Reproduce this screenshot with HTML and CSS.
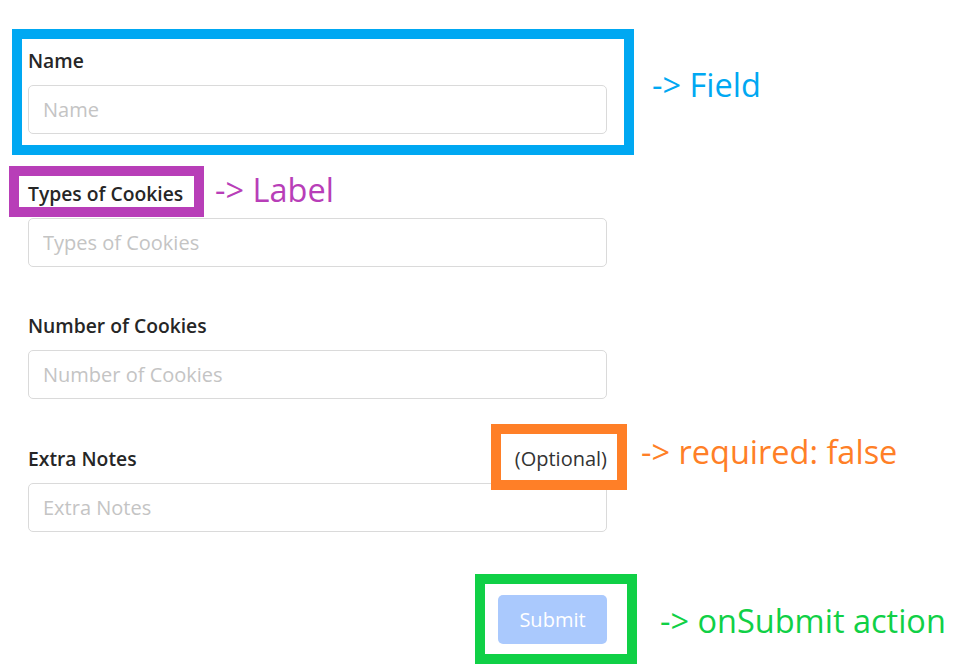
FILE: index.html
```html
<!DOCTYPE html>
<html>
<head>
<meta charset="utf-8">
<link rel="stylesheet" href="styles.css">
</head>
<body>
<div class="page">
  <form class="form">
    <div class="field">
      <div class="label-row"><label class="label">Name</label></div>
      <input class="input" placeholder="Name">
    </div>
    <div class="field">
      <div class="label-row"><label class="label">Types of Cookies</label></div>
      <input class="input" placeholder="Types of Cookies">
    </div>
    <div class="field">
      <div class="label-row"><label class="label">Number of Cookies</label></div>
      <input class="input" placeholder="Number of Cookies">
    </div>
    <div class="field">
      <div class="label-row"><label class="label">Extra Notes</label><span class="optional">(Optional)</span></div>
      <input class="input" placeholder="Extra Notes">
    </div>
    <div class="actions">
      <button type="button" class="submit">Submit</button>
    </div>
  </form>

  <div class="box box-field"></div>
  <div class="note note-field">-&gt; Field</div>

  <div class="box box-label"></div>
  <div class="note note-label">-&gt; Label</div>

  <div class="box box-optional"></div>
  <div class="note note-optional">-&gt; required: false</div>

  <div class="box box-submit"></div>
  <div class="note note-submit">-&gt; onSubmit action</div>
</div>
</body>
</html>
```
FILE: styles.css
```css
html, body {
  margin: 0;
  padding: 0;
  background: #ffffff;
}
.page {
  position: relative;
  width: 957px;
  height: 670px;
  overflow: hidden;
  font-family: "Open Sans", "Noto Sans", sans-serif;
}
.form {
  width: 579px;
  padding: 48px 0 0 28px;
  display: flex;
  flex-direction: column;
}
.field {
  display: flex;
  flex-direction: column;
  gap: 11px;
  margin-bottom: 46.7px;
}
.label-row {
  display: flex;
  justify-content: space-between;
  align-items: baseline;
  height: 26px;
}
.label {
  font-size: 19.3px;
  line-height: 26px;
  font-weight: 600;
  color: #262626;
}
.optional {
  font-size: 20px;
  line-height: 26px;
  color: #333333;
}
.input {
  box-sizing: border-box;
  height: 49px;
  width: 100%;
  border: 1px solid #dadada;
  border-radius: 5px;
  padding: 0 14px;
  font-family: inherit;
  font-size: 20px;
  color: #333;
  outline: none;
}
.input::placeholder {
  color: #c4c4c4;
}
.actions {
  display: flex;
  justify-content: flex-end;
  margin-top: 16px;
}
.submit {
  width: 109px;
  height: 49px;
  border: none;
  border-radius: 5px;
  background: #aac9fd;
  color: #ffffff;
  font-family: inherit;
  font-size: 20px;
  font-weight: 400;
}
.box {
  position: absolute;
  box-sizing: border-box;
  border: 10px solid;
}
.box-field { left: 12px; top: 29px; width: 622px; height: 126px; border-color: #00a8f2; }
.box-label { left: 9px; top: 166px; width: 195px; height: 51px; border-color: #b83eb8; }
.box-optional { left: 491px; top: 424px; width: 136px; height: 66px; border-color: #ff7f27; }
.box-submit { left: 475px; top: 574px; width: 162px; height: 90px; border-color: #10d046; }
.note {
  position: absolute;
  font-family: "Open Sans", "Noto Sans", sans-serif;
  font-size: 32.5px;
  line-height: 40px;
  white-space: nowrap;
}
.note-field { left: 652px; top: 65px; color: #00a8f2; }
.note-label { left: 215px; top: 170px; color: #b83eb8; }
.note-optional { left: 641px; top: 432px; color: #ff7f27; }
.note-submit { left: 660px; top: 601px; color: #10d046; }
```
